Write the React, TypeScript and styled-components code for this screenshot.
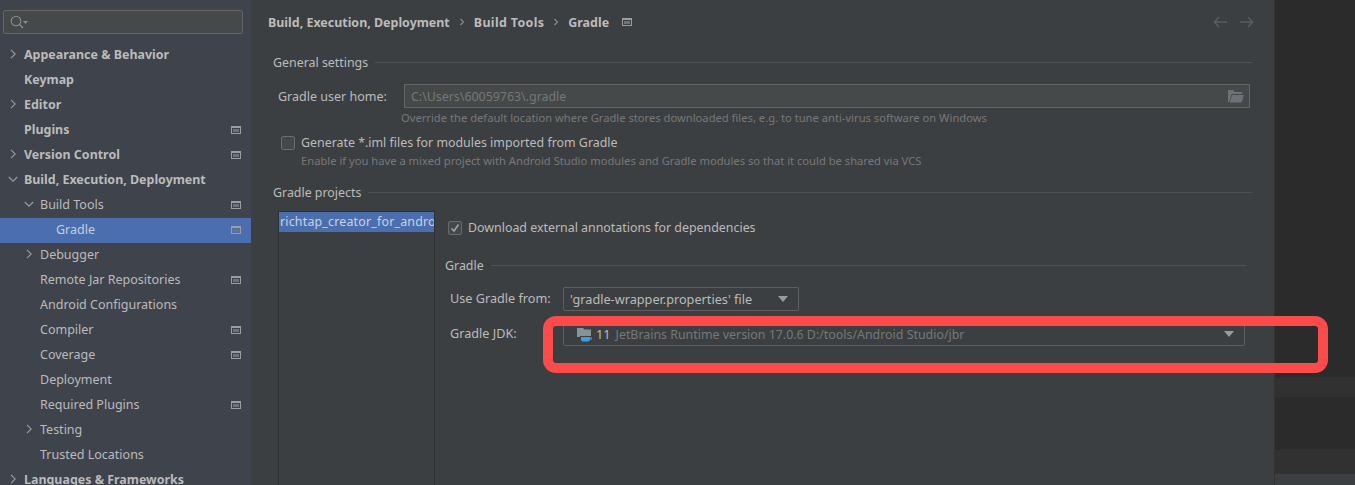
import styled, { createGlobalStyle } from 'styled-components';

const Global = createGlobalStyle`
html,body{margin:0;padding:0;background:#3c3f41;}
body{font-family:"Noto Sans","Open Sans",sans-serif;font-size:12.4px;color:#bbbbbb;overflow:hidden;}
`

const Page = styled.div`
display:flex;
width:1355px;
height:485px;
overflow:hidden;
position:relative;
`

const Sidebar = styled.div`
width:251px;
flex:none;
background:#3e434c;
padding-top:10px;
box-sizing:border-box;
`

const SearchBox = styled.div`
margin:0 8px 9px 3px;
height:24px;
box-sizing:border-box;
background:#45494a;
border:1px solid #646464;
border-radius:2px;
display:flex;
align-items:center;
padding-left:5px;
`

const TreeRow = styled.div<{ $level: number; $selected?: boolean; $bold?: boolean }>`
height:25px;
display:flex;
align-items:center;
position:relative;
box-sizing:border-box;
padding:0 8px 2px ${p => 24 + p.$level * 16}px;
background:${p => (p.$selected ? '#4b6eaf' : 'transparent')};
font-weight:${p => (p.$bold ? 700 : 400)};
font-size:${p => (p.$bold ? 12.45 : 12.5)}px;
color:${p => (p.$selected ? '#c3cedf' : '#bbbbbb')};
white-space:nowrap;
`

const Arrow = styled.span<{ $level: number }>`
position:absolute;
left:${p => 8 + p.$level * 16}px;
top:6px;
width:10px;
height:10px;
display:flex;
`

const ProjectMark = styled.span`
margin-left:auto;
display:flex;
`

const CrumbMark = styled.span`
margin-left:11px;
display:flex;
`

const Main = styled.div`
width:1023px;
flex:none;
background:#3c3f41;
padding:0 22px 0 17px;
box-sizing:border-box;
`

const Crumbs = styled.div`
height:44px;
display:flex;
align-items:center;
font-weight:700;
font-size:12.45px;
color:#bbbbbb;
position:relative;
`

const Crumb = styled.span<{ $ls?: number }>`
letter-spacing:${p => p.$ls ?? 0}px;
white-space:nowrap;
`

const CrumbSep = styled.span`
width:24px;
display:flex;
justify-content:center;
`

const NavArrows = styled.div`
margin-left:auto;
display:flex;
gap:13px;
margin-right:-2px;
`

const Titled = styled.div<{ $inset: number; $right?: number }>`
display:flex;
align-items:center;
gap:7px;
height:20px;
margin-left:${p => p.$inset}px;
margin-right:${p => p.$right ?? 0}px;
white-space:nowrap;
&::after{
  content:"";
  flex:1;
  height:1px;
  background:#515151;
}
`

const FormRow = styled.div`
display:flex;
align-items:center;
`

const Label = styled.div<{ $w: number; $left: number }>`
width:${p => p.$w}px;
margin-left:${p => p.$left}px;
flex:none;
white-space:nowrap;
font-size:12.5px;
`

const DetailLabel = styled(Label)`
font-size:12.65px;
padding-bottom:2px;
`

const PathField = styled.div`
width:846px;
height:24px;
box-sizing:border-box;
background:#45494a;
border:1px solid #646464;
display:flex;
align-items:center;
justify-content:space-between;
padding:0 5px 0 6px;
color:#777777;
`

const Hint = styled.div<{ $left: number }>`
margin-left:${p => p.$left}px;
font-size:11.2px;
color:#787878;
height:20px;
line-height:20px;
white-space:nowrap;
`

const Check = styled.span`
width:14px;
height:14px;
box-sizing:border-box;
flex:none;
background:#43494a;
border:1px solid #6b6b6b;
border-radius:2px;
display:flex;
align-items:center;
justify-content:center;
`

const CheckRow = styled.div<{ $left: number }>`
display:flex;
align-items:center;
gap:6px;
margin-left:${p => p.$left}px;
white-space:nowrap;
`

const Projects = styled.div`
display:flex;
margin-left:10px;
margin-top:9px;
`

const ProjectList = styled.div`
width:157px;
height:280px;
flex:none;
box-sizing:border-box;
border:1px solid #2f3133;
border-bottom:none;
`

const ProjectItem = styled.div`
height:20px;
line-height:20px;
background:#4b6eaf;
color:#c8d2e2;
overflow:hidden;
white-space:nowrap;
padding-left:1px;
letter-spacing:.2px;
`

const Detail = styled.div`
flex:1;
padding-left:10px;
min-width:0;
`

const Select = styled.div<{ $w: number }>`
width:${p => p.$w}px;
height:24px;
box-sizing:border-box;
border:1px solid #5e6060;
border-radius:2px;
background:#3c3f41;
display:flex;
align-items:center;
padding:0 10px 0 6px;
white-space:nowrap;
font-size:12.7px;
`

const Caret = styled.span`
margin-left:auto;
width:0;
height:0;
border-left:5px solid transparent;
border-right:5px solid transparent;
border-top:6px solid #9a9b9c;
`

const Muted = styled.span`
color:#777777;
margin-left:5px;
font-size:12.4px;
`

const JdkIcon = styled.svg`
margin-left:7px;
margin-right:3px;
flex:none;
`

const Right = styled.div`
flex:1;
background:#2b2b2b;
border-left:1px solid #323232;
display:flex;
flex-direction:column;
`

const Strip = styled.div<{ $h: number; $c?: string }>`
height:${p => p.$h}px;
flex:none;
background:${p => p.$c ?? '#2b2b2b'};
`

const RedMark = styled.div`
position:absolute;
left:543px;
top:316px;
width:785px;
height:57px;
box-sizing:border-box;
border:10px solid #fb4b4b;
border-radius:13px;
`

const Gap = styled.div<{ $h: number }>`
height:${p => p.$h}px;
`

const ModIcon = () => (
  <svg width="14" height="14" viewBox="0 0 14 14" fill="none">
    <rect x="2.5" y="3.5" width="9" height="7" stroke="#9a9da1" />
    <rect x="2" y="3" width="10" height="2" fill="#9a9da1" />
    <rect x="4" y="6" width="6" height="3" fill="#6f7379" />
  </svg>
);

const Right10 = ({ c = '#9a9da1' }: { c?: string }) => (
  <svg width="10" height="10" viewBox="0 0 10 10" fill="none">
    <path d="M3 .8 7.2 5 3 9.2" stroke={c} strokeWidth="1.1" />
  </svg>
);

const CrumbChevron = () => (
  <svg width="6" height="10" viewBox="0 0 6 10" fill="none">
    <path d="M1.500 2 4.500 5 1.500 8" stroke="#8a8d90" strokeWidth="1.1" />
  </svg>
);

const Down10 = () => (
  <svg width="10" height="10" viewBox="0 0 10 10" fill="none">
    <path d="M.8 3 5 7.2 9.2 3" stroke="#9a9da1" strokeWidth="1.1" />
  </svg>
);

type Node = { t: string; l: number; arrow?: 'r' | 'd'; bold?: boolean; mod?: boolean; sel?: boolean };

const tree: Node[] = [
  { t: 'Appearance & Behavior', l: 0, arrow: 'r', bold: true },
  { t: 'Keymap', l: 0, bold: true },
  { t: 'Editor', l: 0, arrow: 'r', bold: true },
  { t: 'Plugins', l: 0, bold: true, mod: true },
  { t: 'Version Control', l: 0, arrow: 'r', bold: true, mod: true },
  { t: 'Build, Execution, Deployment', l: 0, arrow: 'd', bold: true },
  { t: 'Build Tools', l: 1, arrow: 'd', mod: true },
  { t: 'Gradle', l: 2, mod: true, sel: true },
  { t: 'Debugger', l: 1, arrow: 'r' },
  { t: 'Remote Jar Repositories', l: 1, mod: true },
  { t: 'Android Configurations', l: 1 },
  { t: 'Compiler', l: 1, mod: true },
  { t: 'Coverage', l: 1, mod: true },
  { t: 'Deployment', l: 1 },
  { t: 'Required Plugins', l: 1, mod: true },
  { t: 'Testing', l: 1, arrow: 'r' },
  { t: 'Trusted Locations', l: 1 },
  { t: 'Languages & Frameworks', l: 0, arrow: 'r', bold: true },
];

export default function App() {
  return (
    <Page>
      <Global />
      <Sidebar>
        <SearchBox>
          <svg width="20" height="16" viewBox="0 0 20 16" fill="none">
            <circle cx="7" cy="7" r="4.8" stroke="#8a8d90" strokeWidth="1.1" />
            <path d="M10.5 10.5 14 14" stroke="#8a8d90" strokeWidth="1.2" />
            <path d="M14 7h5l-2.5 3z" fill="#8a8d90" />
          </svg>
        </SearchBox>
        {tree.map(n => (
          <TreeRow key={n.t} $level={n.l} $bold={n.bold} $selected={n.sel}>
            {n.arrow && (
              <Arrow $level={n.l}>{n.arrow === 'r' ? <Right10 /> : <Down10 />}</Arrow>
            )}
            {n.t}
            {n.mod && (
              <ProjectMark>
                <ModIcon />
              </ProjectMark>
            )}
          </TreeRow>
        ))}
      </Sidebar>
      <Main>
        <Crumbs>
          <Crumb>Build, Execution, Deployment</Crumb>
          <CrumbSep><CrumbChevron /></CrumbSep>
          <Crumb $ls={0.35}>Build Tools</Crumb>
          <CrumbSep><CrumbChevron /></CrumbSep>
          <Crumb>Gradle</Crumb>
          <CrumbMark>
            <ModIcon />
          </CrumbMark>
          <NavArrows>
            <svg width="14" height="12" viewBox="0 0 14 12" fill="none">
              <path d="M6 1 1.5 6 6 11M2 6h12" stroke="#5a5c5e" strokeWidth="1.6" />
            </svg>
            <svg width="14" height="12" viewBox="0 0 14 12" fill="none">
              <path d="M8 1l4.5 5L8 11M0 6h12" stroke="#5a5c5e" strokeWidth="1.6" />
            </svg>
          </NavArrows>
        </Crumbs>
        <Gap $h={8} />
        <Titled $inset={5}>General settings</Titled>
        <Gap $h={12} />
        <FormRow>
          <Label $w={126} $left={10}>Gradle user home:</Label>
          <PathField>
            C:\Users\60059763\.gradle
            <svg width="16" height="13" viewBox="0 0 16 13">
              <path d="M0 0h5l1.5 2H14v2H3.5L1 12H0z" fill="#6c7277" />
              <path d="M4 5h12l-2.5 7.500H1.500z" fill="#6c7277" />
            </svg>
          </PathField>
        </FormRow>
        <Hint $left={133}>Override the default location where Gradle stores downloaded files, e.g. to tune anti-virus software on Windows</Hint>
        <Gap $h={6} />
        <CheckRow $left={13}>
          <Check />
          Generate *.iml files for modules imported from Gradle
        </CheckRow>
        <Hint $left={33}>Enable if you have a mixed project with Android Studio modules and Gradle modules so that it could be shared via VCS</Hint>
        <Gap $h={11} />
        <Titled $inset={5}>Gradle projects</Titled>
        <Projects>
          <ProjectList>
            <ProjectItem>richtap_creator_for_android</ProjectItem>
          </ProjectList>
          <Detail>
            <Gap $h={8} />
            <CheckRow $left={3}>
              <Check>
                <svg width="10" height="10" viewBox="0 0 10 10" fill="none">
                  <path d="M1.500 5.500 4 8l4.500-6.500" stroke="#a0a2a4" strokeWidth="1.600" />
                </svg>
              </Check>
              Download external annotations for dependencies
            </CheckRow>
            <Gap $h={19} />
            <Titled $inset={0} $right={5}>Gradle</Titled>
            <Gap $h={12} />
            <FormRow>
              <DetailLabel $w={113} $left={5}>Use Gradle from:</DetailLabel>
              <Select $w={236}>
                'gradle-wrapper.properties' file
                <Caret />
              </Select>
            </FormRow>
            <Gap $h={11} />
            <FormRow>
              <DetailLabel $w={113} $left={5}>Gradle JDK:</DetailLabel>
              <Select $w={682}>
                <JdkIcon width="16" height="16" viewBox="0 0 16 16">
                  <path d="M0 2h6l1.500 1.500H14V11H0z" fill="#87939b" />
                  <path d="M3 10h12v6H3z" fill="#3c3f41" />
                  <path d="M4 11h9v2.500a2 2 0 0 1-2 2H6a2 2 0 0 1-2-2z" fill="#3ba0dc" />
                  <path d="M13 11.500h2v2h-2v-.7h1.200v-.6H13z" fill="#3ba0dc" />
                </JdkIcon>
                11<Muted>JetBrains Runtime version 17.0.6 D:/tools/Android Studio/jbr</Muted>
                <Caret />
              </Select>
            </FormRow>
          </Detail>
        </Projects>
      </Main>
      <Right>
        <Strip $h={377} />
        <Strip $h={20} $c="#313131" />
        <Strip $h={52} />
        <Strip $h={25} $c="#313131" />
        <Strip $h={11} $c="#3c3f41" />
      </Right>
      <RedMark />
    </Page>
  );
}
